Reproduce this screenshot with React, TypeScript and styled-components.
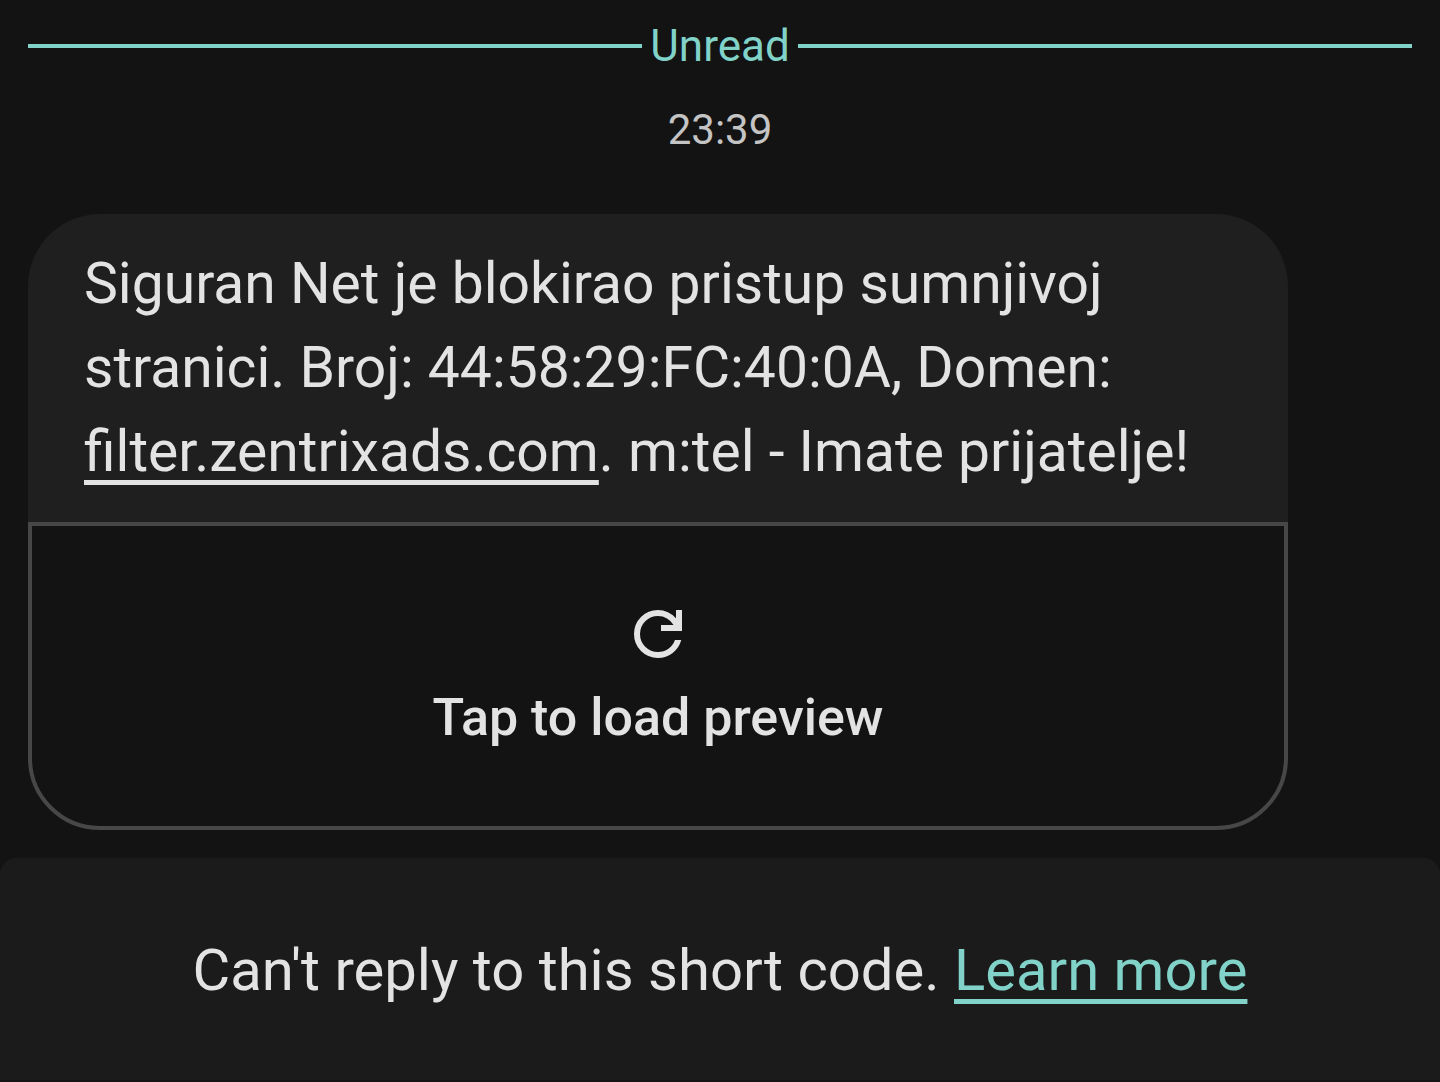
import React from "react";
import styled, { createGlobalStyle } from "styled-components";

const GlobalStyle = createGlobalStyle`
  *, *::before, *::after { box-sizing: border-box; }
  html, body, #root { height: 100%; }
  body {
    margin: 0;
    background: #131313;
    color: #e3e3e3;
    font-family: Roboto, "Noto Sans", sans-serif;
  }
`;

const Screen = styled.div`
  display: flex;
  flex-direction: column;
  min-height: 100%;
  padding-bottom: 4px;
`;

const Conversation = styled.main`
  flex: 1;
  display: flex;
  flex-direction: column;
  padding: 16px 28px 28px;
`;

const UnreadDivider = styled.div`
  display: flex;
  align-items: center;
  gap: 8px;
  color: #81d3c9;
  font-size: 44px;
  line-height: 60px;

  &::before,
  &::after {
    content: "";
    flex: 1;
    height: 4px;
    background: currentColor;
  }
`;

const Timestamp = styled.time`
  margin-top: 24px;
  color: #c4c4c4;
  font-size: 42px;
  line-height: 60px;
  text-align: center;
`;

const Message = styled.article`
  margin: 54px 124px 0 0;
`;

const Bubble = styled.p`
  margin: 0;
  padding: 28px 56px;
  border-radius: 72px 72px 0 0;
  background: #1f1f1f;
  font-size: 57px;
  line-height: 84px;
`;

const TextLink = styled.a<{ $accent?: boolean }>`
  color: ${({ $accent }) => ($accent ? "#81d3c9" : "inherit")};
  text-decoration: underline;
  text-decoration-thickness: 5px;
  text-decoration-skip-ink: none;
  text-underline-offset: 9px;
`;

const PreviewButton = styled.button`
  display: flex;
  flex-direction: column;
  align-items: center;
  gap: 12px;
  width: 100%;
  padding: 72px 56px;
  border: 4px solid #474747;
  border-radius: 0 0 72px 72px;
  background: transparent;
  color: inherit;
  font: 500 52px/72px Roboto, "Noto Sans", sans-serif;
  cursor: pointer;
`;

const RefreshIcon = () => (
  <svg width="72" height="72" viewBox="0 0 24 24" fill="currentColor" aria-hidden="true">
    <path d="M12 20q-3.35 0-5.675-2.325T4 12t2.325-5.675T12 4q1.725 0 3.3.712T18 6.75V4h2v7h-7V9h4.2q-.8-1.4-2.187-2.2T12 6Q9.5 6 7.75 7.75T6 12t1.75 4.25T12 18q1.925 0 3.475-1.1T17.65 14h2.1q-.7 2.65-2.85 4.325T12 20" />
  </svg>
);

const Notice = styled.footer`
  padding: 70px 28px 68px;
  border-radius: 16px 16px 0 0;
  background: #1b1b1b;
  font-size: 58px;
  line-height: 84px;
  text-align: center;
`;

export default function App() {
  return (
    <>
      <GlobalStyle />
      <Screen>
        <Conversation>
          <UnreadDivider>Unread</UnreadDivider>
          <Timestamp dateTime="23:39">23:39</Timestamp>
          <Message>
            <Bubble>
              Siguran Net je blokirao pristup sumnjivoj stranici. Broj: 44:58:29:FC:40:0A, Domen:{" "}
              <TextLink href="#filter">filter.zentrixads.com</TextLink>. m:tel - Imate prijatelje!
            </Bubble>
            <PreviewButton type="button">
              <RefreshIcon />
              Tap to load preview
            </PreviewButton>
          </Message>
        </Conversation>
        <Notice>
          Can't reply to this short code. <TextLink $accent href="#learn-more">Learn more</TextLink>
        </Notice>
      </Screen>
    </>
  );
}
